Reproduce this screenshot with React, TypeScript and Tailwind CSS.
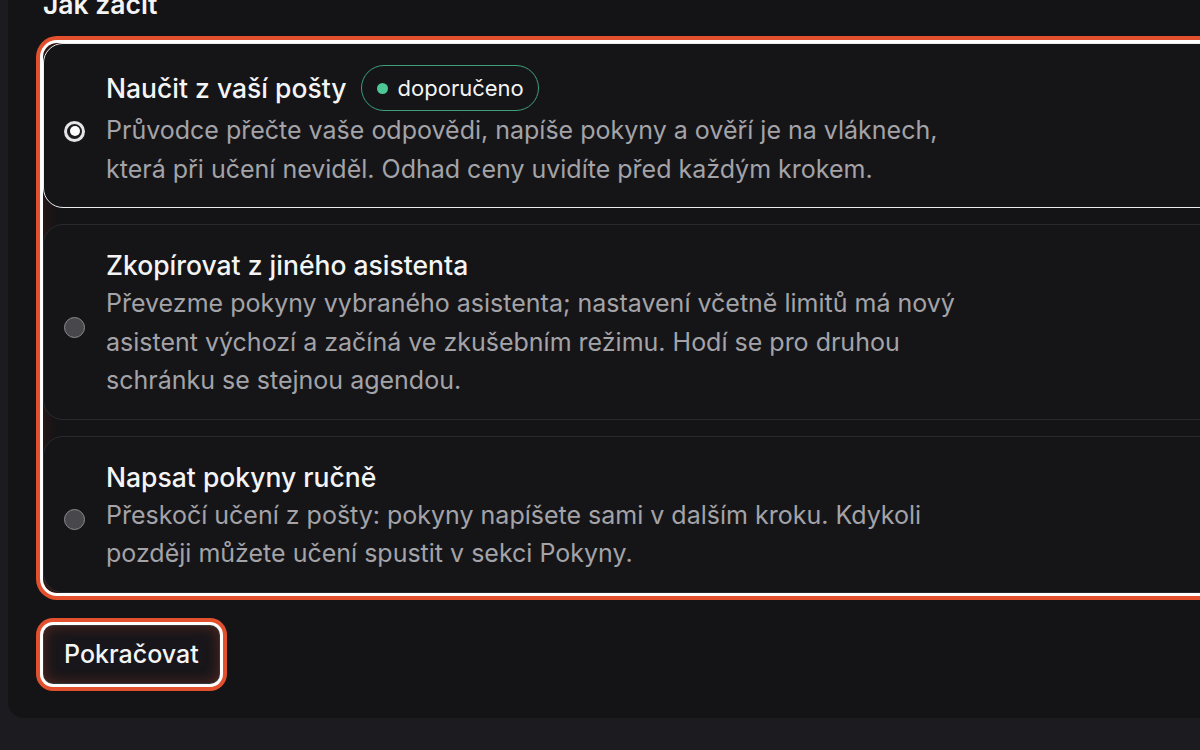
import { useState } from 'react';

type Option = {
  id: string;
  title: string;
  description: string;
  recommended?: boolean;
};

const options: Option[] = [
  {
    id: 'learn',
    title: 'Naučit z vaší pošty',
    description:
      'Průvodce přečte vaše odpovědi, napíše pokyny a ověří je na vláknech, která při učení neviděl. Odhad ceny uvidíte před každým krokem.',
    recommended: true,
  },
  {
    id: 'copy',
    title: 'Zkopírovat z jiného asistenta',
    description:
      'Převezme pokyny vybraného asistenta; nastavení včetně limitů má nový asistent výchozí a začíná ve zkušebním režimu. Hodí se pro druhou schránku se stejnou agendou.',
  },
  {
    id: 'manual',
    title: 'Napsat pokyny ručně',
    description:
      'Přeskočí učení z pošty: pokyny napíšete sami v dalším kroku. Kdykoli později můžete učení spustit v sekci Pokyny.',
  },
];

function Radio({ checked }: { checked: boolean }) {
  if (checked) {
    return (
      <span className="flex h-[21px] w-[21px] shrink-0 items-center justify-center rounded-full border-[3px] border-[#e4e4e7] bg-[#1c1c1f]">
        <span className="block h-[10px] w-[10px] rounded-full bg-white" />
      </span>
    );
  }
  return (
    <span className="block h-[21px] w-[21px] shrink-0 rounded-full border-[1.5px] border-[#8a8a8f] bg-[#48484c]" />
  );
}

export default function App() {
  const [selected, setSelected] = useState('learn');

  return (
    <div
      className="h-[750px] w-[1200px] overflow-hidden bg-[#1c1c20] pl-[8px]"
      style={{ fontFamily: 'Inter, "Noto Sans", sans-serif' }}
    >
      <div className="mt-[-11px] w-[1240px] rounded-bl-[16px] bg-[#141416] px-[35px] pb-[34px]">
        <h2 className="text-[26.5px] font-semibold leading-[30px] text-[#f4f4f5]">Jak začít</h2>

        {/* Radio group with focus ring */}
        <div
          role="radiogroup"
          className="mt-[24px] flex w-[1250px] flex-col gap-[16px] rounded-[14px] shadow-[0_0_0_3px_#ffffff,0_0_0_7px_#e2502e,inset_0_0_18px_rgba(226,80,46,0.18)]"
        >
          {options.map((o) => {
            const active = selected === o.id;
            return (
              <button
                key={o.id}
                type="button"
                onClick={() => setSelected(o.id)}
                className={`flex items-center gap-[21px] rounded-[20px] border bg-[#151518] pb-[19px] pl-[20px] pr-6 pt-[21px] text-left ${
                  active ? 'border-[#ececef]' : 'border-[#2a2a2e]'
                }`}
              >
                <span className="mt-[9px] flex shrink-0">
                  <Radio checked={active} />
                </span>
                <span className="flex flex-col">
                  <span className="flex items-center gap-[14px]">
                    <span className="text-[26.5px] font-medium leading-[38px] text-[#f4f4f5]">{o.title}</span>
                    {o.recommended && (
                      <span className="flex h-[46px] items-center gap-[10px] rounded-full border-[1.5px] border-[#3f9f78] pl-[15px] pr-[14px] text-[22px] leading-none text-[#f4f4f5]">
                        <span className="block h-[11px] w-[11px] rounded-full bg-[#4cc795]" />
                        doporučeno
                      </span>
                    )}
                  </span>
                  <span className="max-w-[870px] text-[25px] leading-[38.5px] text-[#a3a3a8]">
                    {o.description}
                  </span>
                </span>
              </button>
            );
          })}
        </div>

        <button
          type="button"
          className="mt-[32px] rounded-[10px] border border-[#ffffff22] bg-[#18161a] px-[20px] py-[12px] text-[25px] font-medium leading-[33px] text-[#f4f4f5] shadow-[0_0_0_3px_#ffffff,0_0_0_7px_#e2502e,inset_0_0_14px_rgba(226,80,46,0.3)]"
        >
          Pokračovat
        </button>
      </div>
    </div>
  );
}
